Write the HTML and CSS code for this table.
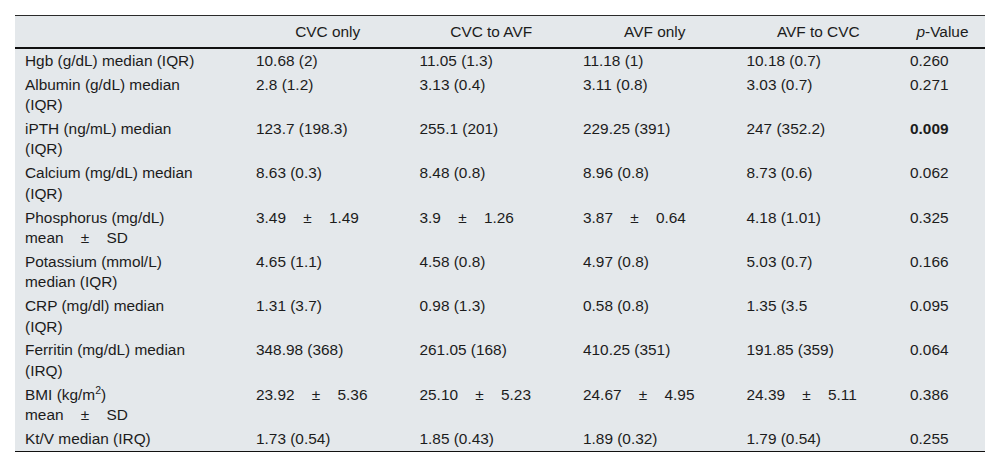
FILE: index.html
```html
<!DOCTYPE html>
<html lang="en">
<head>
<meta charset="utf-8">
<title>Laboratory parameters by vascular access</title>
<link rel="stylesheet" href="styles.css">
</head>
<body>
<table class="data-table">
  <colgroup>
    <col class="c-label">
    <col class="c-val">
    <col class="c-val">
    <col class="c-val">
    <col class="c-val">
    <col class="c-p">
  </colgroup>
  <thead>
    <tr>
      <th class="label"></th>
      <th>CVC only</th>
      <th>CVC to AVF</th>
      <th>AVF only</th>
      <th>AVF to CVC</th>
      <th><i>p</i>-Value</th>
    </tr>
  </thead>
  <tbody>
    <tr>
      <td class="label">Hgb (g/dL) median (IQR)</td>
      <td>10.68 (2)</td>
      <td>11.05 (1.3)</td>
      <td>11.18 (1)</td>
      <td>10.18 (0.7)</td>
      <td>0.260</td>
    </tr>
    <tr>
      <td class="label">Albumin (g/dL) median (IQR)</td>
      <td>2.8 (1.2)</td>
      <td>3.13 (0.4)</td>
      <td>3.11 (0.8)</td>
      <td>3.03 (0.7)</td>
      <td>0.271</td>
    </tr>
    <tr>
      <td class="label">iPTH (ng/mL) median (IQR)</td>
      <td>123.7 (198.3)</td>
      <td>255.1 (201)</td>
      <td>229.25 (391)</td>
      <td>247 (352.2)</td>
      <td><b>0.009</b></td>
    </tr>
    <tr>
      <td class="label">Calcium (mg/dL) median (IQR)</td>
      <td>8.63 (0.3)</td>
      <td>8.48 (0.8)</td>
      <td>8.96 (0.8)</td>
      <td>8.73 (0.6)</td>
      <td>0.062</td>
    </tr>
    <tr>
      <td class="label">Phosphorus (mg/dL) <span class="nw">mean <span class="pm">±</span> SD</span></td>
      <td>3.49 <span class="pm">±</span> 1.49</td>
      <td>3.9 <span class="pm">±</span> 1.26</td>
      <td>3.87 <span class="pm">±</span> 0.64</td>
      <td>4.18 (1.01)</td>
      <td>0.325</td>
    </tr>
    <tr>
      <td class="label">Potassium (mmol/L) median (IQR)</td>
      <td>4.65 (1.1)</td>
      <td>4.58 (0.8)</td>
      <td>4.97 (0.8)</td>
      <td>5.03 (0.7)</td>
      <td>0.166</td>
    </tr>
    <tr>
      <td class="label">CRP (mg/dl) median (IQR)</td>
      <td>1.31 (3.7)</td>
      <td>0.98 (1.3)</td>
      <td>0.58 (0.8)</td>
      <td>1.35 (3.5</td>
      <td>0.095</td>
    </tr>
    <tr>
      <td class="label">Ferritin (mg/dL) median (IRQ)</td>
      <td>348.98 (368)</td>
      <td>261.05 (168)</td>
      <td>410.25 (351)</td>
      <td>191.85 (359)</td>
      <td>0.064</td>
    </tr>
    <tr>
      <td class="label">BMI (kg/m<sup>2</sup>) <span class="nw">mean <span class="pm">±</span> SD</span></td>
      <td>23.92 <span class="pm">±</span> 5.36</td>
      <td>25.10 <span class="pm">±</span> 5.23</td>
      <td>24.67 <span class="pm">±</span> 4.95</td>
      <td>24.39 <span class="pm">±</span> 5.11</td>
      <td>0.386</td>
    </tr>
    <tr>
      <td class="label">Kt/V median (IRQ)</td>
      <td>1.73 (0.54)</td>
      <td>1.85 (0.43)</td>
      <td>1.89 (0.32)</td>
      <td>1.79 (0.54)</td>
      <td>0.255</td>
    </tr>
  </tbody>
</table>
</body>
</html>
```

FILE: styles.css
```css
html, body {
  margin: 0;
  padding: 0;
  background: #ffffff;
}

body {
  padding: 15px 0 0 15px;
  font-family: "Liberation Sans", Arial, sans-serif;
  font-size: 15.4px;
  color: #1c1c1c;
}

.data-table {
  width: 970px;
  table-layout: fixed;
  border-collapse: collapse;
  background: #e4e8eb;
  border-top: 1px solid #2a2a2a;
  border-bottom: 1.5px solid #111111;
}

.c-label { width: 231px; }
.c-val { width: 163.5px; }
.c-p { width: 85px; }

.data-table thead tr {
  border-bottom: 2px solid #111111;
}

.data-table th {
  font-weight: normal;
  text-align: center;
  line-height: 21px;
  padding: 5px 10px;
}

.data-table td {
  text-align: left;
  vertical-align: top;
  line-height: 20.4px;
  padding: 1.8px 10px 1.7px;
}

.data-table td.label {
  padding-right: 44px;
}

.nw {
  white-space: nowrap;
}

.pm {
  margin: 0 13px;
}

sup {
  font-size: 0.68em;
  line-height: 0;
  vertical-align: super;
}
```
